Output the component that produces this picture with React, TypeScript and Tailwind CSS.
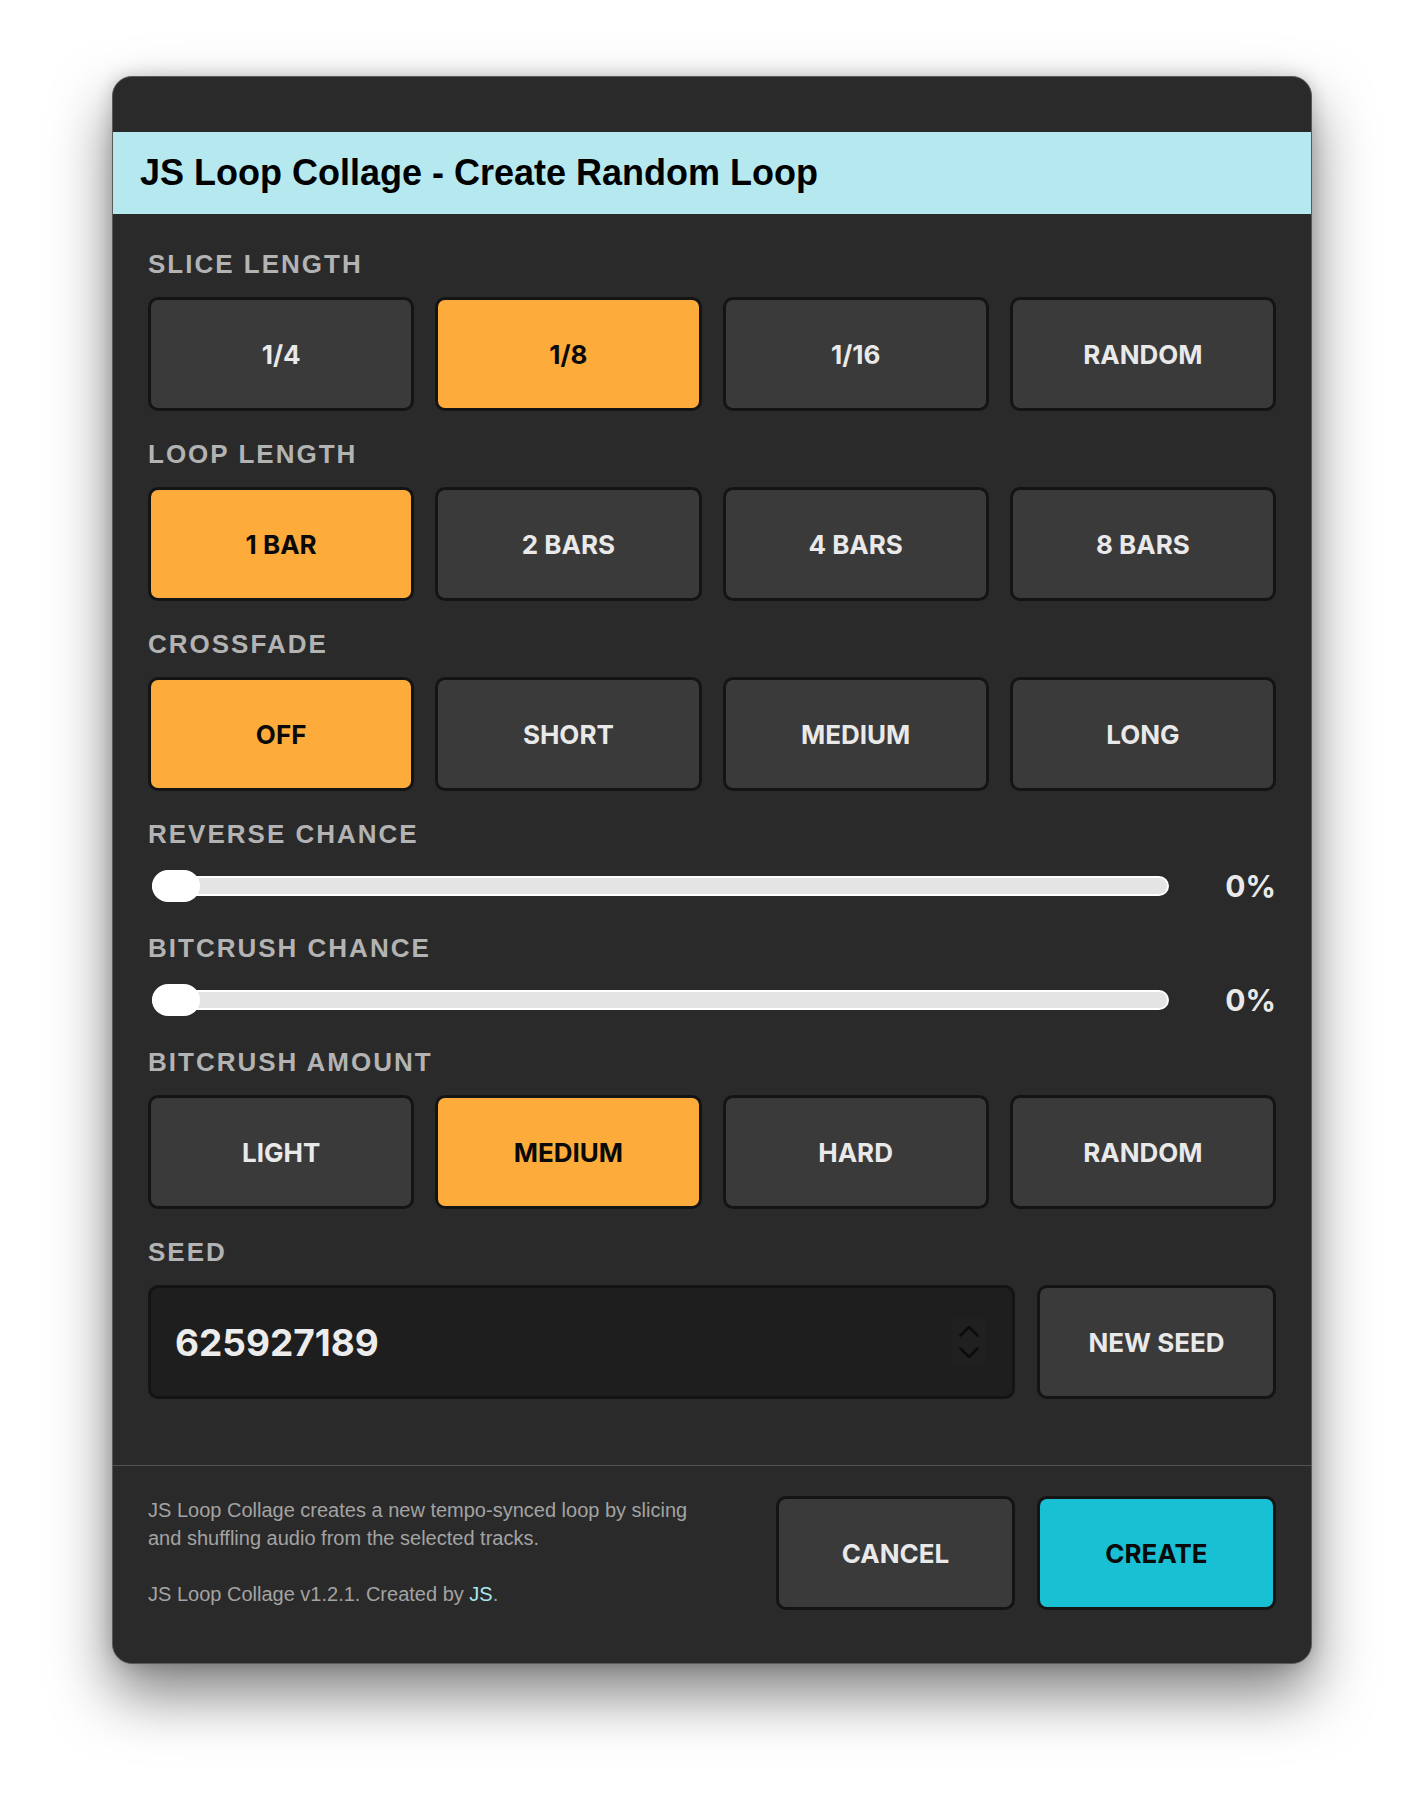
import React, { useState } from 'react';

const labelCls =
  "font-['Liberation_Sans',Arial,sans-serif] font-bold text-[26px] leading-[26px] tracking-[2px] text-[#b3b3b3] mb-[20px]";

const btnBase =
  "h-[114px] rounded-[10px] border-[3px] border-[#141414] flex items-center justify-center font-['Inter',sans-serif] font-bold text-[26px]";

interface OptionRowProps {
  label: string;
  options: string[];
  active: number;
  onSelect: (i: number) => void;
}

const OptionRow: React.FC<OptionRowProps> = ({ label, options, active, onSelect }) => (
  <div className="flex flex-col">
    <div className={labelCls}>{label}</div>
    <div className="grid grid-cols-4 gap-[21px]">
      {options.map((opt, i) => (
        <button
          key={opt}
          onClick={() => onSelect(i)}
          className={
            btnBase +
            (i === active ? ' bg-[#fdac3c] text-[#0a0a0a]' : ' bg-[#3a3a3a] text-[#e9e9e9]')
          }
        >
          {opt}
        </button>
      ))}
    </div>
  </div>
);

const SliderRow: React.FC<{ label: string; value: number }> = ({ label, value }) => (
  <div className="flex flex-col">
    <div className={labelCls}>{label}</div>
    <div className="flex items-center h-[38px]">
      <div className="ml-[4px] flex-1 relative h-[20px] rounded-full bg-[#e4e4e4] border-2 border-white">
        <div
          className="absolute top-1/2 -translate-y-1/2 w-[48px] h-[32px] rounded-full bg-white"
          style={{ left: `calc(${value}% - 2px)` }}
        />
      </div>
      <div className="w-[107px] text-right font-['Inter',sans-serif] font-bold text-[30px] leading-none text-[#e9e9e9]">
        {value}%
      </div>
    </div>
  </div>
);

export default function App() {
  const [slice, setSlice] = useState(1);
  const [loop, setLoop] = useState(0);
  const [fade, setFade] = useState(0);
  const [crush, setCrush] = useState(1);

  return (
    <div className="min-h-[1810px] bg-white pt-[76px]">
      <div className="mx-auto w-[1200px] rounded-[20px] bg-[#2a2a2a] border border-[#5a5a5a] overflow-hidden shadow-[0_0_18px_rgba(0,0,0,0.18),0_30px_60px_rgba(0,0,0,0.5)]">
        {/* title bar */}
        <div className="h-[55px]" />

        <div className="h-[82px] bg-[#b5e8ef] flex items-center px-[27px]">
          <h1 className="font-['Liberation_Sans',Arial,sans-serif] font-bold text-[36px] text-black leading-none">
            JS Loop Collage - Create Random Loop
          </h1>
        </div>

        <div className="px-[35px] pt-[37px] pb-[66px] flex flex-col gap-[30px]">
          <OptionRow label="SLICE LENGTH" options={['1/4', '1/8', '1/16', 'RANDOM']} active={slice} onSelect={setSlice} />
          <OptionRow label="LOOP LENGTH" options={['1 BAR', '2 BARS', '4 BARS', '8 BARS']} active={loop} onSelect={setLoop} />
          <OptionRow label="CROSSFADE" options={['OFF', 'SHORT', 'MEDIUM', 'LONG']} active={fade} onSelect={setFade} />
          <SliderRow label="REVERSE CHANCE" value={0} />
          <SliderRow label="BITCRUSH CHANCE" value={0} />
          <OptionRow label="BITCRUSH AMOUNT" options={['LIGHT', 'MEDIUM', 'HARD', 'RANDOM']} active={crush} onSelect={setCrush} />

          <div className="flex flex-col">
            <div className={labelCls}>SEED</div>
            <div className="flex gap-[22px]">
              <div className="flex-1 h-[114px] rounded-[10px] border-[3px] border-[#141414] bg-[#1e1e1e] flex items-center justify-between pl-[24px] pr-[26px]">
                <span className="font-['Inter',sans-serif] font-bold text-[37px] text-[#ececec] leading-none">
                  625927189
                </span>
                <div className="w-[34px] h-[48px] rounded-[4px] bg-[#202020] flex items-center justify-center">
                  <svg width="20" height="34" viewBox="0 0 20 34" fill="none" stroke="#0c0c0c" strokeWidth="2.5" strokeLinecap="round" strokeLinejoin="round">
                    <path d="M1.5 10.5 L10 2 L18.5 10.5" />
                    <path d="M1.5 23.5 L10 32 L18.5 23.5" />
                  </svg>
                </div>
              </div>
              <button className={btnBase + ' w-[239px] bg-[#3a3a3a] text-[#e9e9e9]'}>NEW SEED</button>
            </div>
          </div>
        </div>

        <div className="h-px bg-[#525252]" />

        <div className="px-[35px] pt-[30px] pb-[53px] flex items-start justify-between">
          <div className="max-w-[560px] font-['Liberation_Sans',Arial,sans-serif] text-[20px] leading-[28px] text-[#a3a3a3]">
            <p>JS Loop Collage creates a new tempo-synced loop by slicing and shuffling audio from the selected tracks.</p>
            <p className="mt-[28px]">
              JS Loop Collage v1.2.1. Created by <span className="text-[#a9e6f0]">JS</span>.
            </p>
          </div>
          <div className="flex gap-[22px]">
            <button className={btnBase + ' w-[239px] bg-[#3a3a3a] text-[#e9e9e9]'}>CANCEL</button>
            <button className={btnBase + ' w-[239px] bg-[#19c0d3] text-[#0a0a0a]'}>CREATE</button>
          </div>
        </div>
      </div>
    </div>
  );
}
